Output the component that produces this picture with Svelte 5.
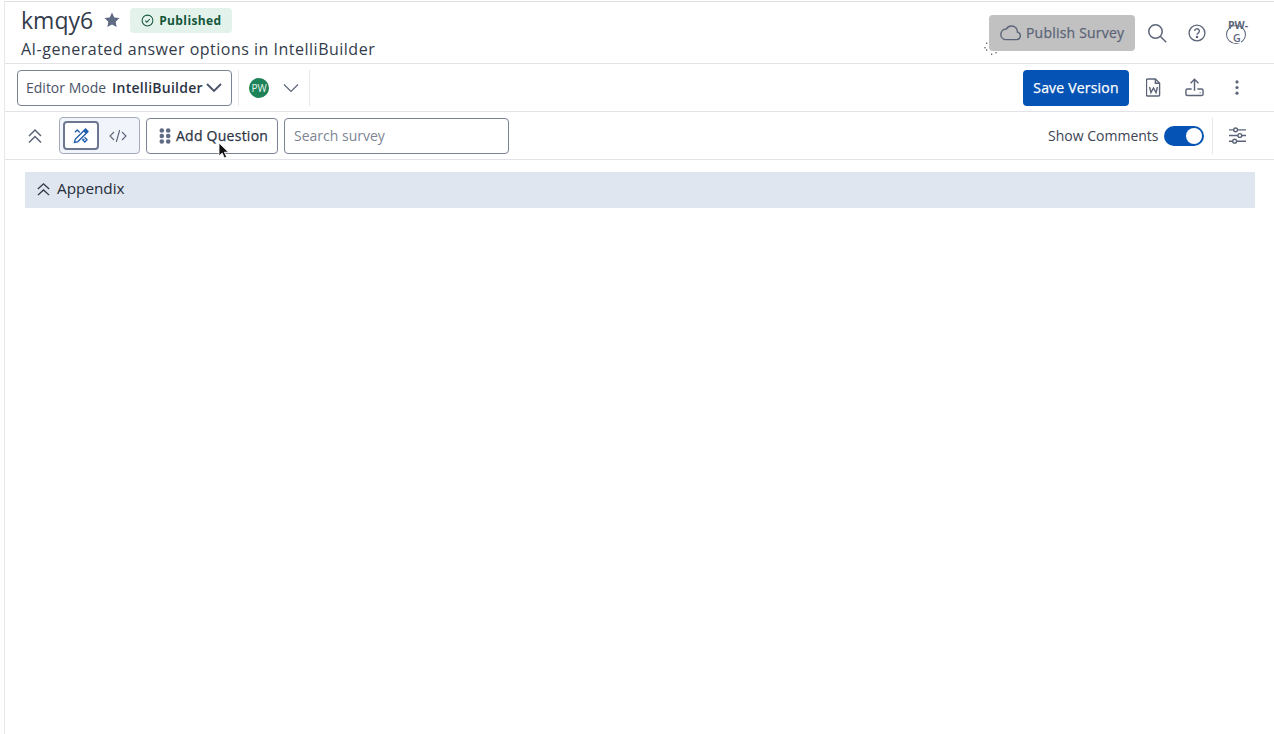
<script>
  let showComments = $state(true);
  let search = $state("");
</script>

<div class="page">
  <header class="title-row">
    <div class="title-block">
      <div class="title-line">
        <h1>kmqy6</h1>
        <svg class="star" viewBox="0 0 16 16" width="16" height="16"><path fill="#5f6b85" d="M8 .6l2.3 4.8 5.2.7-3.8 3.6.9 5.2L8 12.4l-4.6 2.5.9-5.2L.5 6.1l5.2-.7z" /></svg>
        <span class="badge">
          <svg viewBox="0 0 14 14" width="13" height="13" fill="none" stroke="#14573a" stroke-width="1.100"><circle cx="7" cy="7" r="5.8" /><path d="M4.600 7.100l1.700 1.700 3.200-3.400" /></svg>
          Published
        </span>
      </div>
      <p class="subtitle">AI-generated answer options in IntelliBuilder</p>
    </div>
    <div class="title-actions">
      <div class="publish-wrap">
        <button class="publish">
          <svg viewBox="0 0 24 18" width="23" height="17" fill="none" stroke="#5b6478" stroke-width="1.5"><path d="M6 16.5h12.5a4 4 0 0 0 .8-7.9A6 6 0 0 0 13 2.2a6 6 0 0 0-5.300 3.100A5.700 5.700 0 0 0 6 16.500z" /></svg>
          Publish Survey
        </button>
        <svg class="spinner" viewBox="0 0 14 14" width="14" height="14" fill="#444"><circle cx="2.700" cy="1.300" r=".7" /><circle cx="1" cy="5.700" r=".7" /><circle cx="2.700" cy="8" r=".7" /><circle cx="7.700" cy="12.300" r=".7" /><circle cx="12" cy="10.700" r=".7" /></svg>
      </div>
      <button class="icon-btn" aria-label="Search">
        <svg viewBox="0 0 20 20" width="20" height="20" fill="none" stroke="#5b6478" stroke-width="1.500"><circle cx="8.500" cy="8.500" r="6.700" /><path d="M13.500 13.500l5.700 5.700" /></svg>
      </button>
      <button class="icon-btn help" aria-label="Help">
        <svg viewBox="0 0 20 20" width="18" height="18" fill="none" stroke="#5b6478" stroke-width="1.500"><circle cx="10" cy="10" r="8.800" /><path d="M7.400 7.800a2.600 2.600 0 1 1 3.900 2.300c-.9.500-1.300.9-1.300 1.800" /><circle cx="10" cy="14.500" r=".7" fill="#5b6478" /></svg>
      </button>
      <div class="avatar-broken">
        <span class="ring"></span>
        <span class="alt">PW-</span>
        <span class="alt second-line">G</span>
      </div>
    </div>
  </header>

  <div class="toolbar">
    <button class="mode-select">
      <span class="mode-label">Editor Mode</span>
      <span class="mode-value">IntelliBuilder</span>
      <svg viewBox="0 0 16 10" width="16" height="10" fill="none" stroke="#4a5468" stroke-width="1.900"><path d="M1 1l7 7 7-7" /></svg>
    </button>
    <div class="divider first"></div>
    <div class="people">
      <span class="pw">PW</span>
      <svg viewBox="0 0 16 10" width="16" height="10" fill="none" stroke="#5b6478" stroke-width="1.200"><path d="M1 1.500l7 7 7-7" /></svg>
    </div>
    <div class="divider"></div>
    <div class="spacer"></div>
    <button class="save">Save Version</button>
    <button class="icon-btn word" aria-label="Export to Word">
      <svg viewBox="0 0 16 20" width="15" height="19" fill="none" stroke="#5b6478" stroke-width="1.500"><path d="M1.500 1h8.500l4.500 4.500V18a1 1 0 0 1-1 1h-12a1 1 0 0 1-1-1V2a1 1 0 0 1 1-1z" /><path d="M10 1v4.500h4.500" /><path d="M3.800 9.500l1.500 6 2.700-5 2.700 5 1.500-6" /></svg>
    </button>
    <button class="icon-btn upload" aria-label="Upload">
      <svg viewBox="0 0 20 20" width="19" height="19" fill="none" stroke="#5b6478" stroke-width="1.500"><path d="M10 13.500V1.500M5.800 5.500L10 1.300l4.200 4.200" /><path d="M7 11.500H2.500A1.500 1.500 0 0 0 1 13v4a1.500 1.500 0 0 0 1.500 1.500h15A1.500 1.500 0 0 0 19 17v-4a1.500 1.500 0 0 0-1.500-1.500H13" /><path d="M15.500 15.500h.8" /></svg>
    </button>
    <button class="icon-btn kebab" aria-label="More">
      <svg viewBox="0 0 4 16" width="4" height="15" fill="#5b6478"><circle cx="2" cy="2" r="1.700" /><circle cx="2" cy="8" r="1.700" /><circle cx="2" cy="14" r="1.700" /></svg>
    </button>
  </div>

  <div class="toolbar second">
    <button class="icon-btn collapse" aria-label="Collapse all">
      <svg viewBox="0 0 16 16" width="16" height="16" fill="none" stroke="#5b6478" stroke-width="1.500"><path d="M2 8l6-6 6 6M2 14.500l6-6 6 6" /></svg>
    </button>
    <div class="view-toggle">
      <button class="view active" aria-label="Design">
        <svg viewBox="0 0 16 16" width="16" height="16" fill="none" stroke="#1d5bab" stroke-width="1.300"><path d="M1.500 14.500l.7-3.200L10.800 2.700l2.500 2.500-8.600 8.600z" /><path d="M11.500 2l1-1 2.500 2.500-1 1z" fill="#1d5bab" /><path d="M2 4.200L4.200 2l2.500 2.500M9.300 11.500l2.200-.2M11.500 9.300L14 11.800 11.800 14l-2.500-2.500" /></svg>
      </button>
      <button class="view" aria-label="Code">
        <svg viewBox="0 0 18 14" width="18" height="14" fill="none" stroke="#5b6478" stroke-width="1.100"><path d="M5 3L1 7l4 4M13 3l4 4-4 4M10.700 1L7.300 13" /></svg>
      </button>
    </div>
    <button class="add-question">
      <svg viewBox="0 0 12 16" width="12" height="16" fill="#5f6b85"><circle cx="2.800" cy="2.500" r="2.300" /><circle cx="9.200" cy="2.500" r="2.300" /><circle cx="2.800" cy="8" r="2.300" /><circle cx="9.200" cy="8" r="2.300" /><circle cx="2.800" cy="13.500" r="2.300" /><circle cx="9.200" cy="13.500" r="2.300" /></svg>
      Add Question
      <svg class="cursor" viewBox="0 0 12 18" width="12" height="18"><path fill="#111" stroke="#fff" stroke-width=".8" d="M1 1v13l3.200-3 2.200 5 2.200-1-2.200-4.800H10.500z" /></svg>
    </button>
    <input class="search" type="text" placeholder="Search survey" bind:value={search} />
    <div class="spacer"></div>
    <span class="comments-label">Show Comments</span>
    <button class="switch" class:on={showComments} aria-label="Show Comments" onclick={() => (showComments = !showComments)}>
      <span class="knob"></span>
    </button>
    <div class="divider short"></div>
    <button class="icon-btn sliders" aria-label="Settings">
      <svg viewBox="0 0 20 18" width="19" height="17" fill="#fff" stroke="#5b6478" stroke-width="1.500"><path d="M1 3h18M1 9h18M1 15h18" /><circle cx="8" cy="3" r="2" /><circle cx="12.500" cy="9" r="2" /><circle cx="7" cy="15" r="2" /></svg>
    </button>
  </div>

  <section class="content">
    <div class="group-bar">
      <svg viewBox="0 0 16 16" width="15" height="15" fill="none" stroke="#2f3747" stroke-width="1.400"><path d="M2 7.500l6-5.500 6 5.500M2 14l6-5.500 6 5.500" /></svg>
      <span>Appendix</span>
    </div>
  </section>
</div>

<style>
  :global(body) {
    background: #fff;
  }
  .page {
    box-sizing: border-box;
    height: 733px;
    margin-left: 4px;
    margin-top: 1px;
    border-left: 1px solid #e6e8ec;
    border-top: 1px solid #dfe1e5;
    font-family: "Open Sans", "Noto Sans", sans-serif;
    color: #2c3444;
    overflow: hidden;
  }
  button {
    font-family: inherit;
    background: none;
    border: none;
    padding: 0;
    cursor: pointer;
  }
  .title-row {
    box-sizing: border-box;
    height: 62px;
    display: flex;
    justify-content: space-between;
    padding: 5px 0 0 16px;
    border-bottom: 1px solid #e1e3e7;
  }
  .title-line {
    display: flex;
    align-items: center;
    height: 26px;
  }
  h1 {
    margin: 0;
    font-size: 23px;
    font-weight: 400;
    line-height: 26px;
    color: #333b4b;
  }
  .star {
    margin-left: 11px;
  }
  .badge {
    display: flex;
    align-items: center;
    gap: 5px;
    height: 25px;
    margin-left: 10px;
    padding: 0 10px 0 11px;
    background: #e3f3ec;
    border-radius: 4px;
    color: #14573a;
    font-size: 12px;
    font-weight: 700;
    letter-spacing: 0.4px;
  }
  .subtitle {
    margin: 5px 0 0;
    font-size: 16px;
    line-height: 22px;
    color: #333b4b;
    letter-spacing: 0.5px;
  }
  .title-actions {
    display: flex;
    align-items: center;
    height: 51px;
  }
  .publish-wrap {
    position: relative;
  }
  .publish {
    display: flex;
    align-items: center;
    gap: 4px;
    box-sizing: border-box;
    width: 146px;
    height: 36px;
    padding-left: 10px;
    border-radius: 4px;
    background: #c1c1c1;
    color: #5b6478;
    font-size: 14px;
    letter-spacing: 0.2px;
    -webkit-text-stroke: 0.25px #5b6478;
  }
  .spinner {
    position: absolute;
    left: -5px;
    top: 27px;
  }
  .icon-btn {
    display: flex;
    align-items: center;
    justify-content: center;
  }
  .title-actions .icon-btn {
    margin-left: 12px;
    width: 20px;
  }
  .title-actions .help {
    margin-left: 20px;
  }
  .avatar-broken {
    position: relative;
    width: 24px;
    height: 24px;
    margin: 0 25px 0 18px;
  }
  .ring {
    position: absolute;
    left: 1px;
    top: 4px;
    box-sizing: border-box;
    width: 20px;
    height: 19px;
    border: 1.500px solid #5b6478;
    border-radius: 50%;
  }
  .alt {
    position: absolute;
    left: 3px;
    top: -3px;
    font-size: 10.500px;
    font-weight: 700;
    line-height: 15px;
    color: #5b6478;
  }
  .second-line {
    left: 8px;
    top: 12px;
    line-height: 10px;
    font-weight: 600;
    background: #fff;
  }
  .toolbar {
    box-sizing: border-box;
    height: 48px;
    display: flex;
    align-items: center;
    padding-left: 12px;
    border-bottom: 1px solid #e1e3e7;
  }
  .spacer {
    flex: 1;
  }
  .divider {
    width: 1px;
    height: 36px;
    background: #e6e8ec;
  }
  .divider.first {
    margin-left: 6px;
  }
  .mode-select {
    box-sizing: border-box;
    display: flex;
    align-items: center;
    width: 215px;
    height: 36px;
    padding: 0 9px 0 8px;
    border: 1px solid #7a8294;
    border-radius: 4px;
    font-size: 14px;
    background: #fff;
  }
  .mode-select svg {
    margin-left: auto;
  }
  .mode-label {
    color: #4a5468;
  }
  .mode-value {
    margin-left: 6px;
    font-weight: 600;
    color: #2c3444;
    letter-spacing: 0.25px;
  }
  .people {
    display: flex;
    align-items: center;
    gap: 14px;
    width: 70px;
    padding-left: 10px;
    box-sizing: border-box;
  }
  .pw {
    display: flex;
    align-items: center;
    justify-content: center;
    width: 20px;
    height: 20px;
    border-radius: 50%;
    background: #1e8259;
    color: #e8f5ef;
    font-size: 10px;
  }
  .save {
    width: 106px;
    height: 36px;
    border-radius: 4px;
    background: #0554b5;
    color: #fff;
    font-size: 14px;
    letter-spacing: 0.2px;
    -webkit-text-stroke: 0.25px #fff;
  }
  .word {
    margin-left: 17px;
  }
  .upload {
    margin-left: 24px;
  }
  .kebab {
    margin-left: 31px;
    margin-right: 35px;
  }
  .second {
    padding-left: 0;
  }
  .collapse {
    margin-left: 22px;
  }
  .view-toggle {
    box-sizing: border-box;
    display: flex;
    align-items: center;
    width: 81px;
    height: 37px;
    margin-left: 16px;
    padding: 3px;
    border: 1px solid #a3abbb;
    border-radius: 4px;
    background: #f1f5fb;
  }
  .view {
    display: flex;
    align-items: center;
    justify-content: center;
    box-sizing: border-box;
    width: 36px;
    height: 29px;
    border-radius: 4px;
  }
  .view + .view {
    margin-left: 1px;
  }
  .view.active {
    border: 2px solid #6d7790;
    background: #fff;
  }
  .add-question {
    position: relative;
    box-sizing: border-box;
    display: flex;
    align-items: center;
    gap: 5px;
    width: 132px;
    height: 36px;
    margin-left: 6px;
    padding-left: 12px;
    border: 1px solid #7a8294;
    border-radius: 4px;
    background: #fff;
    color: #2c3444;
    font-size: 14px;
    letter-spacing: 0.25px;
    -webkit-text-stroke: 0.25px #2c3444;
  }
  .cursor {
    position: absolute;
    left: 71px;
    top: 23px;
  }
  .search {
    box-sizing: border-box;
    width: 225px;
    height: 36px;
    margin-left: 6px;
    padding: 0 9px;
    border: 1px solid #7a8294;
    border-radius: 4px;
    font-family: inherit;
    font-size: 14px;
    color: #2c3444;
    outline: none;
  }
  .search::placeholder {
    color: #7d8594;
    opacity: 1;
  }
  .comments-label {
    font-size: 14px;
    color: #3c4454;
  }
  .switch {
    position: relative;
    width: 40px;
    height: 20px;
    margin-left: 5.500px;
    border-radius: 10px;
    background: #c1c6d0;
  }
  .switch.on {
    background: #0554b5;
  }
  .knob {
    position: absolute;
    left: 3px;
    top: 2px;
    width: 16px;
    height: 16px;
    border-radius: 50%;
    background: #fff;
  }
  .switch.on .knob {
    left: 22px;
  }
  .divider.short {
    margin-left: 8px;
  }
  .sliders {
    margin-left: 15px;
    margin-right: 27px;
  }
  .content {
    padding: 12px 19px 0 20px;
  }
  .group-bar {
    display: flex;
    align-items: center;
    gap: 6px;
    box-sizing: border-box;
    height: 36px;
    padding: 0 0 2px 11px;
    background: #dfe6ef;
    font-size: 15.300px;
    color: #262d3b;
  }
  .group-bar span {
    margin-bottom: 2px;
  }
</style>
